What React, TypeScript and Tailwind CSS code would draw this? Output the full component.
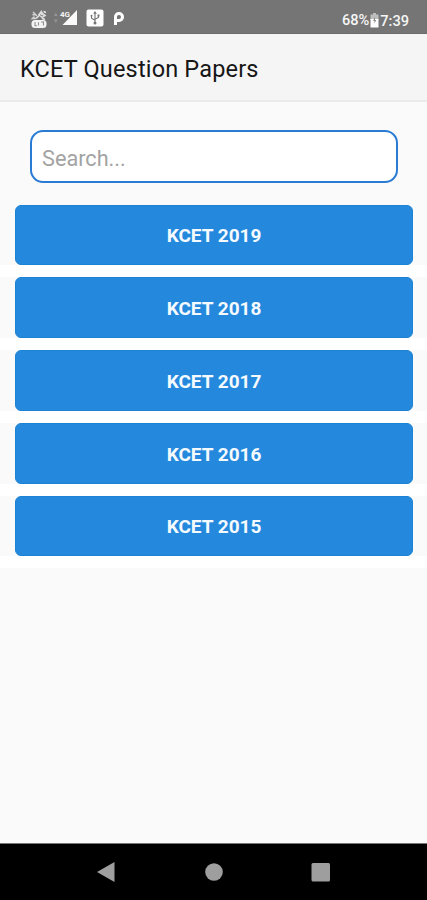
const PAPERS = ["KCET 2019", "KCET 2018", "KCET 2017", "KCET 2016", "KCET 2015"];

const VolteIcon = () => (
  <svg width="18" height="21" viewBox="0 0 18 21" fill="none">
    <path d="M3 4l4 4M2.5 7l3-1M6 10.5H2.5l2-2" stroke="#d2d2d2" strokeWidth="1.6" />
    <path d="M8 6.5l3.5-4.5 1.5 3 3.5 2.5-4.5 3z" fill="#dadada" />
    <path d="M6 10.5l6-5.5M13.5 3.5l2.5 1M12 10.5l3 1" stroke="#e6e6e6" strokeWidth="1.5" />
    <path d="M10 6.8l3 1.2" stroke="#808080" strokeWidth="1" />
    <rect x="1.5" y="12" width="15" height="8" rx="3.5" fill="#f3f3f3" />
    <path d="M5 14v3.7h2M8.5 14.2v3.3M11 14h2.5v3.4" stroke="#909090" strokeWidth="1.1" />
  </svg>
);

const SignalIcon = () => (
  <svg width="26" height="18" viewBox="0 0 26 18">
    <path d="M1 7l1.8-3.5L4.6 7zM1 10.5l1.8 3.5 1.8-3.5z" fill="#959595" />
    <path d="M24 1v15H9.5z" fill="#fafafa" />
    <text x="7" y="8" fontSize="8" fontWeight="700" fill="#f3f3f3" fontFamily="Roboto, sans-serif">4G</text>
  </svg>
);

const UsbIcon = () => (
  <svg width="18" height="18" viewBox="0 0 18 18" fill="none">
    <rect x="0.5" y="0.5" width="17" height="17" rx="2" fill="#fff" />
    <path d="M9 4v9M5.5 7v2.2L9 11.2M12.5 6.5v2L9 10.3" stroke="#757575" strokeWidth="1.1" />
    <path d="M9 2l1.8 2.8H7.2z" fill="#757575" />
    <circle cx="9" cy="14" r="1.5" fill="#757575" />
    <circle cx="5.5" cy="6.7" r="1" fill="#757575" />
    <path d="M11.5 5.5h2v2h-2z" fill="#757575" />
  </svg>
);

const ParkingIcon = () => (
  <svg width="12" height="15" viewBox="0 0 12 15" fill="none">
    <path d="M2.5 14V5.8a3.2 3.2 0 0 1 3.2-3.2h.4a3.3 3.3 0 0 1 0 6.8H3" stroke="#fff" strokeWidth="3" />
  </svg>
);

const BatteryIcon = () => (
  <svg width="9" height="15" viewBox="0 0 9 15">
    <path d="M3 0h3v1.5h2.5V7h-8V1.5H3z" fill="#bdbdbd" />
    <path d="M.5 6h8v8.5h-8z" fill="#fff" />
    <path d="M5 3.5L3.2 8h1.3v2.5L6.2 7H5z" fill="#858585" />
  </svg>
);

const StatusBar = () => (
  <header className="flex h-[34px] shrink-0 items-center justify-between border-b border-[#6b6b6b] bg-[#757575] pr-[18px] pl-[30px]">
    <div className="flex items-center pt-[3px]">
      <VolteIcon />
      <span className="ml-[5px]"><SignalIcon /></span>
      <span className="ml-[7px]"><UsbIcon /></span>
      <span className="ml-[9px]"><ParkingIcon /></span>
    </div>
    <div className="flex items-center pt-[7px] text-[14.6px] leading-none font-medium text-[#f5f5f5]">
      <span className="pt-px">68%</span>
      <span className="mx-px"><BatteryIcon /></span>
      <span className="pt-[3px]">7:39</span>
    </div>
  </header>
);

const NavBar = () => (
  <nav className="h-[57px] shrink-0 border-t border-[#777] bg-black">
    <svg width="427" height="56" viewBox="0 0 427 56" fill="#9e9e9e">
      <path d="M97 28l17.5-10v20z" />
      <circle cx="214" cy="28" r="8.8" />
      <rect x="311.5" y="19" width="18.5" height="18.5" rx="1.5" />
    </svg>
  </nav>
);

export default function App() {
  return (
    <div className="flex h-[900px] w-[427px] flex-col overflow-hidden bg-[#fafafa] font-[Roboto,sans-serif]">
      <StatusBar />
      <div className="flex h-[68px] shrink-0 items-center border-b-2 border-[#ebebeb] bg-[#f5f5f5] pt-[6px] pl-5">
        <h1 className="text-[23.5px] tracking-[0.17px] text-[#161616]">KCET Question Papers</h1>
      </div>

      <main className="flex-1">
        <div className="px-[30px] pt-7 pb-[21.5px]">
          <input
            type="text"
            placeholder="Search..."
            className="block h-[53px] w-[368px] rounded-[13px] border-2 border-[#2a7bd3] bg-white px-[10px] pt-[3px] text-[21.7px] outline-none placeholder:text-[#a3a3a3]"
          />
        </div>

        {PAPERS.map((paper) => (
          <div key={paper} className="border-b-[12px] border-white px-[14.5px]">
            <button className="block h-[60.8px] w-full rounded-[6px] border border-[#1c82d3] bg-[#2489dd] pt-[3px] pl-[1px] text-[19px] font-bold text-[#f5faff]">
              {paper}
            </button>
          </div>
        ))}
      </main>

      <NavBar />
    </div>
  );
}
